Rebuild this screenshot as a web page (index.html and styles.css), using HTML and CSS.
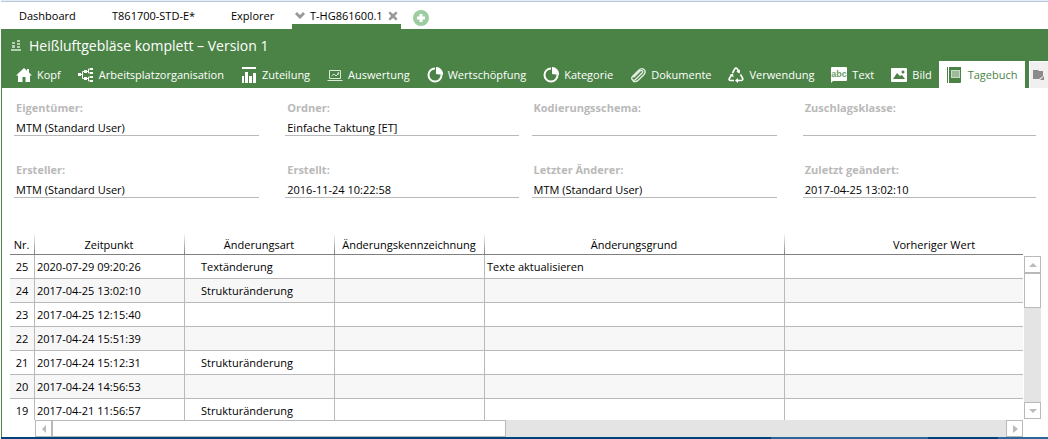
FILE: index.html
```html
<!DOCTYPE html>
<html lang="de">
<head>
<meta charset="utf-8">
<title>Heißluftgebläse komplett – Version 1</title>
<meta name="viewport" content="width=device-width, initial-scale=1">
<link rel="stylesheet" href="styles.css">
</head>
<body>
<div class="app">
  <nav class="doc-tabs" aria-label="Dokumente">
    <button class="doc-tab doc-tab-dash">Dashboard</button>
    <button class="doc-tab doc-tab-std">T861700-STD-E*</button>
    <button class="doc-tab doc-tab-explorer">Explorer</button>
    <div class="doc-tab-active">
      <svg class="chevron" viewBox="0 0 10 8" width="10" height="8"><path d="M0 2 2 0l3 3 3-3 2 2-5 5z" fill="#999"/></svg>
      <button class="doc-tab">T-HG861600.1</button>
      <button class="icon-button" aria-label="Schließen"><svg viewBox="0 0 10 10" width="10" height="10"><path d="M2 0.5 5 3l3-2.500L9.500 2 7 5l2.500 3L8 9.500 5 7 2 9.500.5 8 3 5 .5 2z" fill="#999"/></svg></button>
    </div>
    <button class="icon-button add-tab" aria-label="Neuer Tab"><svg viewBox="0 0 16 16" width="16" height="16"><circle cx="8" cy="8" r="8" fill="#9ccc9f"/><path d="M6.500 4h3v2.500H12v3H9.500V12h-3V9.500H4v-3h2.500z" fill="#fff"/></svg></button>
  </nav>

  <header class="header">
    <div class="title-row">
      <svg viewBox="0 0 10 12" width="10" height="12" fill="#b5d0b2"><path d="M1 2h3v2H1zM1 5h3v3H1zM6 0h3v2H6zM6 3h3v2H6zM6 6h3v2H6zM0 9h10v2H0z"/></svg>
      <h1 class="title">Heißluftgebläse komplett – Version 1</h1>
    </div>
    <nav class="sections" aria-label="Bereiche">
      <button class="section"><svg class="icon" viewBox="0 0 16 16"><path d="M8 1 0 8.500h2V15h4.500v-5h3v5H14V8.500h2L13 5.600V2h-2v1.800z" fill="#fff"/></svg>Kopf</button>
      <button class="section"><svg class="icon" viewBox="0 0 16 16"><path d="M0 6h3v3H0zM6 3h3v3H6zM6 10h3v3H6zM12 1h3v2h-3zM12 5h3v2h-3zM12 9h3v2h-3zM12 13h3v2h-3z" fill="#fff"/><path d="M3 7.500h1.500M6 4.500H4.500v7H6M9 4.500h1.500M12 2h-1.500v4H12M9 11.500h1.500M12 10h-1.500v4H12" fill="none" stroke="#fff"/></svg>Arbeitsplatzorganisation</button>
      <button class="section"><svg class="icon" viewBox="0 0 16 16"><path d="M1 0h14v2H1zM1 9h2v7H1zM4 5h3v11H4zM8 9h3v7H8zM12 6h3v10h-3z" fill="#fff"/></svg>Zuteilung</button>
      <button class="section"><svg class="icon" viewBox="0 0 16 16"><path d="M2.500 3.500h11v8h-11zM.5 13.500h15M4.500 9l2.500-2 2 2 3-3" fill="none" stroke="#dce8da"/><path d="M12 5v3l-2-2z" fill="#dce8da"/></svg>Auswertung</button>
      <button class="section"><svg class="icon" viewBox="0 0 16 16"><path d="M8 1.500a6.500 6.500 0 1 0 6.500 6.500" fill="none" stroke="#fff" stroke-width="2"/><path d="M9 0a7 7 0 0 1 7 8L9 7z" fill="#fff"/></svg>Wertschöpfung</button>
      <button class="section"><svg class="icon" viewBox="0 0 16 16"><path d="M8 1.500a6.500 6.500 0 1 0 6.500 6.500" fill="none" stroke="#fff" stroke-width="2"/><path d="M9 0a7 7 0 0 1 7 8L9 7z" fill="#fff"/></svg>Kategorie</button>
      <button class="section"><svg class="icon" viewBox="0 0 16 16"><path d="m4 10 6-6c1.800-1.500 3.500.3 2 2l-6.500 6.500c-2.500 2-5-.5-3-3L9 3c3.500-3.300 8 .5 5 4.500L8.500 13c-1.500 1.500-3 2-5 1.500" fill="none" stroke="#e3ede1" stroke-width="1.400" stroke-linecap="round"/></svg>Dokumente</button>
      <button class="section"><svg class="icon" viewBox="0 0 16 16"><path d="m4.500 6 2.300-4.200Q8 .5 9.200 1.800L11 5M12.500 7.500l2.300 4Q15 13.500 13 13.500H9M6 13.500H2.500Q.5 13 1.300 11.500L3.500 8" fill="none" stroke="#fff" stroke-width="1.600"/><path d="m12 2.500-.3 4-3.400-1.800zM10 11v5l-3-2.500zM1.500 8l3.500-1.500.5 3.800z" fill="#fff"/></svg>Verwendung</button>
      <button class="section"><svg class="icon" viewBox="0 0 16 16"><path d="M0 1q0-1 1-1h14q1 0 1 1v12q0 1-1 1H2l-2 2z" fill="#fff"/><text class="icon-abc" x="8" y="10" text-anchor="middle">abc</text></svg>Text</button>
      <button class="section"><svg class="icon" viewBox="0 0 16 16"><rect y="1" width="16" height="14" rx="1" fill="#fff"/><path d="m2 12 4-6 3 3 2-1 3 4z" fill="#4b8346"/><circle cx="12" cy="5" r="1.500" fill="#4b8346"/></svg>Bild</button>
      <button class="section section-active"><svg class="icon" viewBox="0 0 16 16"><path d="M0 0h1v16H0zM2 0h12v15q0 1-1 1H2z" fill="#4b8346"/><path d="M4 3h9v8H4z" fill="#c8dac5"/><path d="M5 5h7M5 7h7M5 9h7" stroke="#4b8346" stroke-width=".7"/></svg>Tagebuch</button>
      <button class="section-more" aria-label="Weitere"><svg class="icon" viewBox="0 0 16 16"><path d="M2 3h5l1 1h4v5l-4 3H2z" fill="#8b8b8b"/><path d="M13 9v4H9z" fill="#8b8b8b"/></svg></button>
    </nav>
  </header>

  <main class="content">
    <form class="fields">
      <div class="field-pair">
        <div class="field"><label for="owner">Eigentümer:</label><input id="owner" value="MTM (Standard User)" readonly></div>
        <div class="field"><label for="folder">Ordner:</label><input id="folder" value="Einfache Taktung [ET]" readonly></div>
      </div>
      <div class="field-pair">
        <div class="field"><label for="coding">Kodierungsschema:</label><input id="coding" readonly></div>
        <div class="field"><label for="surcharge">Zuschlagsklasse:</label><input id="surcharge" readonly></div>
      </div>
      <div class="field-pair">
        <div class="field"><label for="creator">Ersteller:</label><input id="creator" value="MTM (Standard User)" readonly></div>
        <div class="field"><label for="created">Erstellt:</label><input id="created" value="2016-11-24 10:22:58" readonly></div>
      </div>
      <div class="field-pair">
        <div class="field"><label for="editor">Letzter Änderer:</label><input id="editor" value="MTM (Standard User)" readonly></div>
        <div class="field"><label for="changed">Zuletzt geändert:</label><input id="changed" value="2017-04-25 13:02:10" readonly></div>
      </div>
    </form>

    <section class="log">
      <div class="log-view">
        <table class="log-table">
          <colgroup><col class="col-no"><col class="col-std"><col class="col-std"><col class="col-std"><col class="col-wide"><col class="col-wide"></colgroup>
          <thead><tr><th>Nr.</th><th>Zeitpunkt</th><th>Änderungsart</th><th>Änderungskennzeichnung</th><th>Änderungsgrund</th><th>Vorheriger Wert</th></tr></thead>
          <tbody>
            <tr><td>25</td><td>2020-07-29 09:20:26</td><td>Textänderung</td><td></td><td>Texte aktualisieren</td><td></td></tr>
            <tr><td>24</td><td>2017-04-25 13:02:10</td><td>Strukturänderung</td><td></td><td></td><td></td></tr>
            <tr><td>23</td><td>2017-04-25 12:15:40</td><td></td><td></td><td></td><td></td></tr>
            <tr><td>22</td><td>2017-04-24 15:51:39</td><td></td><td></td><td></td><td></td></tr>
            <tr><td>21</td><td>2017-04-24 15:12:31</td><td>Strukturänderung</td><td></td><td></td><td></td></tr>
            <tr><td>20</td><td>2017-04-24 14:56:53</td><td></td><td></td><td></td><td></td></tr>
            <tr><td>19</td><td>2017-04-21 11:56:57</td><td>Strukturänderung</td><td></td><td></td><td></td></tr>
          </tbody>
        </table>
      </div>
      <div class="scroll scroll-v">
        <button class="scroll-button" aria-label="Nach oben"><svg viewBox="0 0 8 8" width="8" height="8"><path d="m4 2 4 4H0z" fill="#bbb"/></svg></button>
        <div class="thumb thumb-v"></div>
        <button class="scroll-button scroll-end" aria-label="Nach unten"><svg viewBox="0 0 8 8" width="8" height="8"><path d="M0 2h8L4 6z" fill="#bbb"/></svg></button>
      </div>
      <div class="scroll scroll-h">
        <button class="scroll-button" aria-label="Nach links"><svg viewBox="0 0 8 8" width="8" height="8"><path d="M6 0v8L2 4z" fill="#bbb"/></svg></button>
        <div class="thumb thumb-h"></div>
        <button class="scroll-button scroll-end" aria-label="Nach rechts"><svg viewBox="0 0 8 8" width="8" height="8"><path d="M2 0v8l5-4z" fill="#bbb"/></svg></button>
      </div>
    </section>
  </main>
  <footer class="taskbar"></footer>
</div>
</body>
</html>
```
FILE: styles.css
```css
* { box-sizing: border-box; }
body {
  margin: 0;
  background: #fff;
  color: #000;
  font: 11px/16px "Open Sans", "Noto Sans", sans-serif;
}
button, input { font: inherit; color: inherit; }
button { border: 0; padding: 0; background: none; white-space: nowrap; }
svg { display: block; flex: none; }

.app { display: flex; flex-direction: column; height: 100vh; overflow: hidden; padding-left: 1px; }

.doc-tabs {
  display: flex;
  align-items: stretch;
  flex: none;
  height: 29px;
  border-top: 1px solid #e4edf8;
  box-shadow: inset 0 1px #b9c8dc;
  padding: 1px 0 0 18px;
}
.doc-tab-dash { width: 93px; text-align: left; }
.doc-tab-std { width: 119px; text-align: left; }
.doc-tab-explorer { width: 61px; text-align: left; }
.doc-tab-active {
  display: flex;
  align-items: center;
  gap: 5px;
  padding: 5px 3px 0;
  border-bottom: 5px solid #4b8346;
}
.add-tab { margin-left: 12px; padding-top: 5px; }

.header { flex: none; background: #4b8346; color: #fff; }
.title-row { display: flex; align-items: center; gap: 8px; height: 32px; padding: 1px 0 0 10px; }
.title { margin: 0; font-size: 14px; line-height: 20px; font-weight: 400; }

.sections { display: flex; height: 27px; padding-left: 15px; gap: 17px; overflow: hidden; }
.section { display: flex; align-items: center; gap: 5px; padding-top: 1px; flex: none; }
.icon { width: 16px; height: 16px; }
.icon-abc { font: bold 9px "Liberation Sans", sans-serif; fill: #6f9c6b; }
.section-active { background: #fff; color: #4b8346; padding: 1px 8px 0; margin-left: -10px; }
.section-more { flex: 1 0 18px; margin-left: -13px; padding-left: 1px; background: #f0f0f0; border: solid #fff; border-width: 1px 0 0 1px; }

.content { flex: 1; min-height: 0; display: flex; flex-direction: column; border-left: 1px solid #4b8346; }
.fields { display: grid; grid-template-columns: 1fr 1fr; gap: 26px 13px; padding: 12px 12px 0; }
.field-pair { display: grid; grid-template-columns: 245fr 233fr; gap: 26px; }
.field { display: flex; flex-direction: column; gap: 4px; min-width: 0; }
.field label { padding-left: 2px; color: #b9b9b9; font-weight: 700; }
.field input { width: 100%; height: 16px; padding: 0 2px; border: 0; border-bottom: 1px solid #b9b9b9; border-radius: 0; background: none; outline: 0; }

.log {
  flex: 1;
  min-height: 0;
  display: grid;
  grid-template-columns: minmax(0, 1fr) 17px;
  grid-template-rows: minmax(0, 1fr) 17px;
  column-gap: 1px;
  margin-top: 35px;
  padding: 0 7px 0 8px;
}
.log-view { overflow: hidden; }
.log-table { width: 1075px; table-layout: fixed; border-collapse: separate; border-spacing: 0; }
.col-no { width: 25px; }
.col-std { width: 150px; }
.col-wide { width: 300px; }
.log-table th {
  height: 22px;
  padding: 2px 2px 0 0;
  font-weight: 400;
  text-align: center;
  border-bottom: 1px solid #808080;
  background: linear-gradient(#fff, #808080) right / 1px 100% no-repeat;
}
.log-table td {
  height: 24px;
  padding: 0 2px;
  border-right: 1px solid #b9b9b9;
  border-bottom: 1px solid #b9b9b9;
}
.log-table td:nth-child(1) { padding: 0; text-align: center; }
.log-table td:nth-child(3) { padding-left: 16px; }
.log-table tr:nth-child(even) td { background: #f7f7f7; }

.scroll { display: flex; background: #e4e4e4; }
.scroll-v { flex-direction: column; margin: 23px 0 1px; }
.scroll-h { margin-left: 25px; }
.scroll-button { display: grid; place-items: center; flex: none; width: 17px; height: 17px; background: #fff; border: 1px solid #b9b9b9; }
.scroll-end { margin: auto 0 0 auto; }
.thumb { background: #fff; border: 1px solid #b9b9b9; }
.thumb-v { height: 35px; }
.thumb-h { width: 46%; }

.taskbar { flex: none; height: 2px; background: linear-gradient(90deg, #00437a 73.5%, #2a6899 73.5% 88.5%, #00437a 88.5% 95.2%, #2a6899 95.2%); }
```
